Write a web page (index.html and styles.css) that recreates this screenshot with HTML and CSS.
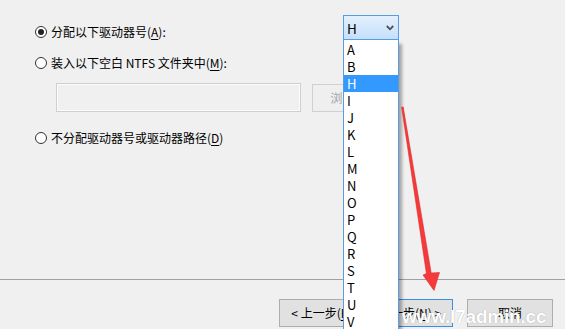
FILE: index.html
```html
<!DOCTYPE html>
<html lang="zh-CN">
<head>
<meta charset="utf-8">
<title>分配驱动器号和路径</title>
<link rel="stylesheet" href="styles.css">
</head>
<body>
<div class="dialog">
  <div class="content">
    <div class="opt opt1"><span class="radio checked"></span><span class="label">分配以下驱动器号(<u>A</u>):</span></div>
    <div class="opt opt2"><span class="radio"></span><span class="label">装入以下空白 NTFS 文件夹中(<u>M</u>):</span></div>
    <div class="pathrow"><div class="pathbox"></div><div class="browse">浏览(<u>R</u>)...</div></div>
    <div class="opt opt3"><span class="radio"></span><span class="label">不分配驱动器号或驱动器路径(<u>D</u>)</span></div>
  </div>
  <div class="sep"></div>
  <div class="footer">
    <button class="btn back">&lt; 上一步(<u>B</u>)</button>
    <button class="btn next">下一步(<u>N</u>) &gt;</button>
    <button class="btn cancel">取消</button>
  </div>

  <div class="combo"><span class="combo-val">H</span>
    <svg class="chev" width="8" height="6" viewBox="0 0 8 6"><path d="M0.8 1 L4 4.3 L7.2 1" fill="none" stroke="#505050" stroke-width="1.8"/></svg>
  </div>
  <ul class="list">
    <li>A</li><li>B</li><li class="sel">H</li><li>I</li><li>J</li><li>K</li><li>L</li><li>M</li><li>N</li><li>O</li><li>P</li><li>Q</li><li>R</li><li>S</li><li>T</li><li>U</li><li>V</li><li>W</li><li>X</li>
  </ul>

  <svg class="arrow" width="565" height="329" viewBox="0 0 565 329">
    <polygon points="401.6,107 403.2,107 431.2,273 439.5,272.5 434,290.5 423,275 426.4,273.5" fill="#f43a3a" stroke="#e02a2a" stroke-width="0.6" stroke-linejoin="round"/>
  </svg>

  <div class="watermark">www.l7admin.cc</div>
</div>
</body>
</html>
```

FILE: styles.css
```css
* { box-sizing: border-box; }
html, body { margin: 0; padding: 0; }
body {
  background: #f0f0f0;
  font-family: "Noto Sans CJK SC", "Noto Sans", sans-serif;
  font-size: 12px;
  color: #000;
  overflow: hidden;
}
.dialog {
  position: relative;
  width: 565px;
  height: 329px;
  overflow: hidden;
  background: #f0f0f0;
}
.content {
  height: 279px;
  padding: 22px 0 0 35px;
}
.opt {
  display: flex;
  align-items: center;
  gap: 4px;
  height: 20px;
  line-height: 20px;
}
.opt2 { margin-top: 11px; }
.opt3 { margin-top: 16px; }
.label u { text-decoration-thickness: 1px; text-underline-offset: 2px; }
.radio {
  width: 12px;
  height: 12px;
  border: 1px solid #333;
  border-radius: 50%;
  background: #fff;
  display: flex;
  align-items: center;
  justify-content: center;
  flex: none;
}
.radio.checked::after {
  content: "";
  width: 6px;
  height: 6px;
  border-radius: 50%;
  background: #222;
}
.pathrow {
  display: flex;
  align-items: flex-start;
  gap: 11px;
  margin-top: 10px;
  padding-left: 21px;
}
.pathbox {
  width: 245px;
  height: 29px;
  border: 1px solid #cfcfcf;
  box-shadow: inset 0 0 0 1px #fbfbfb;
  background: #f0f0f0;
}
.browse {
  margin-top: 1px;
  width: 87px;
  height: 28px;
  border: 1px solid #d0d0d0;
  background: #efefef;
  color: #a3a3a3;
  display: flex;
  align-items: center;
  justify-content: center;
  line-height: 16px;
}
.sep {
  height: 1px;
  background: #a0a0a0;
}
.footer {
  display: flex;
  justify-content: flex-end;
  padding: 19px 12px 0 0;
}
.btn {
  width: 86px;
  height: 28px;
  border: 1px solid #adadad;
  background: #e1e1e1;
  font-family: "Noto Sans CJK SC", "Noto Sans", sans-serif;
  font-size: 12px;
  line-height: 16px;
  color: #000;
  padding: 0;
}
.btn u { text-underline-offset: 2px; }
.back { margin-right: 2px; }
.next { border-color: #3a8ee6; }
.cancel { margin-left: 14px; }

.combo {
  position: absolute;
  left: 343px;
  top: 15px;
  width: 56px;
  height: 25px;
  border: 1px solid #569de5;
  background: linear-gradient(#e3f0fd, #c5e0fa);
  display: flex;
  align-items: center;
  padding-left: 3px;
  font-size: 13.5px;
  line-height: 20px;
  z-index: 2;
}
.chev {
  position: absolute;
  right: 4px;
  top: 9px;
}
.list {
  position: absolute;
  left: 343px;
  top: 40px;
  width: 56px;
  height: 320px;
  margin: 0;
  padding: 1px 0 0 0;
  list-style: none;
  background: #fff;
  border-left: 1px solid #5b9bdf;
  border-right: 1px solid #5b9bdf;
  box-shadow: 3px 4px 3px rgba(0, 0, 0, 0.32);
  z-index: 2;
  font-size: 13px;
}
.list li {
  height: 17px;
  line-height: 17px;
  padding-left: 3px;
}
.list li.sel {
  background: #3399ff;
  color: #fff;
}
.arrow {
  position: absolute;
  left: 0;
  top: 0;
  pointer-events: none;
  z-index: 3;
}
.watermark {
  position: absolute;
  left: 402px;
  top: 307px;
  font-family: "Liberation Sans", Arial, sans-serif;
  font-weight: bold;
  font-size: 19px;
  line-height: 19px;
  letter-spacing: -0.2px;
  color: #fff;
  text-shadow: 0 0 1px rgba(0, 0, 0, 0.35);
  white-space: nowrap;
  z-index: 4;
}
```
